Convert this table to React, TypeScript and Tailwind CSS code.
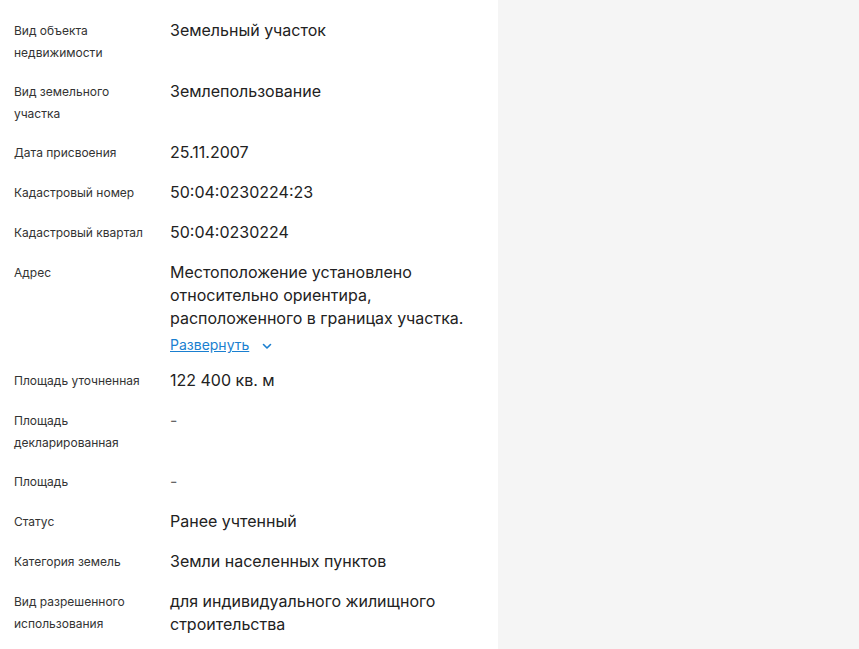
import React from 'react';

interface Row {
  label: string;
  value?: string;
  empty?: boolean;
  expandable?: boolean;
}

const rows: Row[] = [
  { label: 'Вид объекта недвижимости', value: 'Земельный участок' },
  { label: 'Вид земельного участка', value: 'Землепользование' },
  { label: 'Дата присвоения', value: '25.11.2007' },
  { label: 'Кадастровый номер', value: '50:04:0230224:23' },
  { label: 'Кадастровый квартал', value: '50:04:0230224' },
  {
    label: 'Адрес',
    value: 'Местоположение установлено относительно ориентира, расположенного в границах участка.',
    expandable: true,
  },
  { label: 'Площадь уточненная', value: '122 400 кв. м' },
  { label: 'Площадь декларированная', empty: true },
  { label: 'Площадь', empty: true },
  { label: 'Статус', value: 'Ранее учтенный' },
  { label: 'Категория земель', value: 'Земли населенных пунктов' },
  { label: 'Вид разрешенного использования', value: 'для индивидуального жилищного строительства' },
];

export default function App() {
  return (
    <div className="flex h-[649px] w-full overflow-hidden bg-[#f5f5f5] font-['Inter',sans-serif]">
      {/* Details panel */}
      <div className="w-[498px] shrink-0 bg-white pt-[11px]">
        {rows.map((row) => (
          <div key={row.label} className="flex py-2 pl-[14px]">
            <div className="w-[156px] shrink-0 pr-3 pt-px text-xs leading-[22px] text-[#333]">
              {row.label}
            </div>
            <div className="w-[300px] pb-px text-base leading-[23px] text-[#222]">
              {row.empty ? (
                <span className="text-[#666]">-</span>
              ) : (
                <span>{row.value}</span>
              )}
              {row.expandable && (
                <div className="mt-[5px] mb-[-3px] flex items-center gap-[12px] leading-[24px]">
                  <a href="#" className="text-sm text-[#1a7fd0] underline">
                    Развернуть
                  </a>
                  <svg width="12" height="12" viewBox="0 0 12 12" fill="none" className="mt-px">
                    <path d="M2.5 4.5 6 8l3.5-3.5" stroke="#1a7fd0" strokeWidth="1.6" strokeLinecap="round" strokeLinejoin="round" />
                  </svg>
                </div>
              )}
            </div>
          </div>
        ))}
      </div>
      {/* Side area */}
      <div className="flex-1" />
    </div>
  );
}
